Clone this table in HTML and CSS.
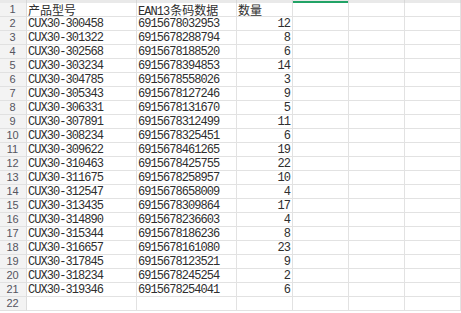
FILE: index.html
```html
<!DOCTYPE html>
<html lang="zh-CN">
<head>
<meta charset="utf-8">
<title>Sheet</title>
<link rel="stylesheet" href="styles.css">
</head>
<body>
<div class="sheet">
  <div class="colhead"></div><div class="colhead"></div><div class="colhead"></div><div class="colhead"></div><div class="colhead sel"></div><div class="colhead"></div><div class="colhead"></div>

  <div class="rh">1</div><div class="c"><span class="cjk">产品型号</span></div><div class="c"><span class="lat">EAN13</span><span class="cjk">条码数据</span></div><div class="c"><span class="cjk">数量</span></div><div class="c"></div><div class="c"></div><div class="c"></div>
  <div class="rh">2</div><div class="c">CUX30-300458</div><div class="c">6915678032953</div><div class="c n">12</div><div class="c"></div><div class="c"></div><div class="c"></div>
  <div class="rh">3</div><div class="c">CUX30-301322</div><div class="c">6915678288794</div><div class="c n">8</div><div class="c"></div><div class="c"></div><div class="c"></div>
  <div class="rh">4</div><div class="c">CUX30-302568</div><div class="c">6915678188520</div><div class="c n">6</div><div class="c"></div><div class="c"></div><div class="c"></div>
  <div class="rh">5</div><div class="c">CUX30-303234</div><div class="c">6915678394853</div><div class="c n">14</div><div class="c"></div><div class="c"></div><div class="c"></div>
  <div class="rh">6</div><div class="c">CUX30-304785</div><div class="c">6915678558026</div><div class="c n">3</div><div class="c"></div><div class="c"></div><div class="c"></div>
  <div class="rh">7</div><div class="c">CUX30-305343</div><div class="c">6915678127246</div><div class="c n">9</div><div class="c"></div><div class="c"></div><div class="c"></div>
  <div class="rh">8</div><div class="c">CUX30-306331</div><div class="c">6915678131670</div><div class="c n">5</div><div class="c"></div><div class="c"></div><div class="c"></div>
  <div class="rh">9</div><div class="c">CUX30-307891</div><div class="c">6915678312499</div><div class="c n">11</div><div class="c"></div><div class="c"></div><div class="c"></div>
  <div class="rh">10</div><div class="c">CUX30-308234</div><div class="c">6915678325451</div><div class="c n">6</div><div class="c"></div><div class="c"></div><div class="c"></div>
  <div class="rh">11</div><div class="c">CUX30-309622</div><div class="c">6915678461265</div><div class="c n">19</div><div class="c"></div><div class="c"></div><div class="c"></div>
  <div class="rh">12</div><div class="c">CUX30-310463</div><div class="c">6915678425755</div><div class="c n">22</div><div class="c"></div><div class="c"></div><div class="c"></div>
  <div class="rh">13</div><div class="c">CUX30-311675</div><div class="c">6915678258957</div><div class="c n">10</div><div class="c"></div><div class="c"></div><div class="c"></div>
  <div class="rh">14</div><div class="c">CUX30-312547</div><div class="c">6915678658009</div><div class="c n">4</div><div class="c"></div><div class="c"></div><div class="c"></div>
  <div class="rh">15</div><div class="c">CUX30-313435</div><div class="c">6915678309864</div><div class="c n">17</div><div class="c"></div><div class="c"></div><div class="c"></div>
  <div class="rh">16</div><div class="c">CUX30-314890</div><div class="c">6915678236603</div><div class="c n">4</div><div class="c"></div><div class="c"></div><div class="c"></div>
  <div class="rh">17</div><div class="c">CUX30-315344</div><div class="c">6915678186236</div><div class="c n">8</div><div class="c"></div><div class="c"></div><div class="c"></div>
  <div class="rh">18</div><div class="c">CUX30-316657</div><div class="c">6915678161080</div><div class="c n">23</div><div class="c"></div><div class="c"></div><div class="c"></div>
  <div class="rh">19</div><div class="c">CUX30-317845</div><div class="c">6915678123521</div><div class="c n">9</div><div class="c"></div><div class="c"></div><div class="c"></div>
  <div class="rh">20</div><div class="c">CUX30-318234</div><div class="c">6915678245254</div><div class="c n">2</div><div class="c"></div><div class="c"></div><div class="c"></div>
  <div class="rh">21</div><div class="c">CUX30-319346</div><div class="c">6915678254041</div><div class="c n">6</div><div class="c"></div><div class="c"></div><div class="c"></div>
  <div class="rh">22</div><div class="c"></div><div class="c"></div><div class="c"></div><div class="c"></div><div class="c"></div><div class="c"></div>
</div>
</body>
</html>
```

FILE: styles.css
```css
html, body {
  margin: 0;
  padding: 0;
  background: #ffffff;
  overflow: hidden;
}

.sheet {
  display: grid;
  grid-template-columns: 27px 110px 100px 56px 56px 56px 56px;
  grid-template-rows: 3px;
  grid-auto-rows: 14px;
  width: 461px;
}

.colhead {
  background: #e9e9e9;
  border-right: 1px solid #d8d8d8;
  box-sizing: border-box;
}

.colhead.sel {
  background: linear-gradient(#e9e9e9 0 1px, #21a366 1px);
}

.rh {
  box-sizing: border-box;
  background: #f3f3f3;
  border-right: 1px solid #dcdcdc;
  border-bottom: 1px solid #e1e1e1;
  font-family: "Liberation Sans", Arial, sans-serif;
  font-size: 11px;
  line-height: 13px;
  color: #555560;
  text-align: center;
  padding-right: 1px;
}

.c {
  box-sizing: border-box;
  border-right: 1px solid #e2e2e2;
  border-bottom: 1px solid #e2e2e2;
  font-family: "Liberation Mono", "Noto Sans CJK SC", monospace;
  font-size: 12px;
  letter-spacing: -0.95px;
  line-height: 12px;
  padding: 1px 0 0 1px;
  color: #2e2e2e;
  white-space: nowrap;
}

.c.n {
  text-align: right;
  padding-right: 2px;
}

.lat {
  margin-right: 1px;
}

.cjk {
  font-family: "Noto Sans CJK SC", sans-serif;
  letter-spacing: 0;
}
```
